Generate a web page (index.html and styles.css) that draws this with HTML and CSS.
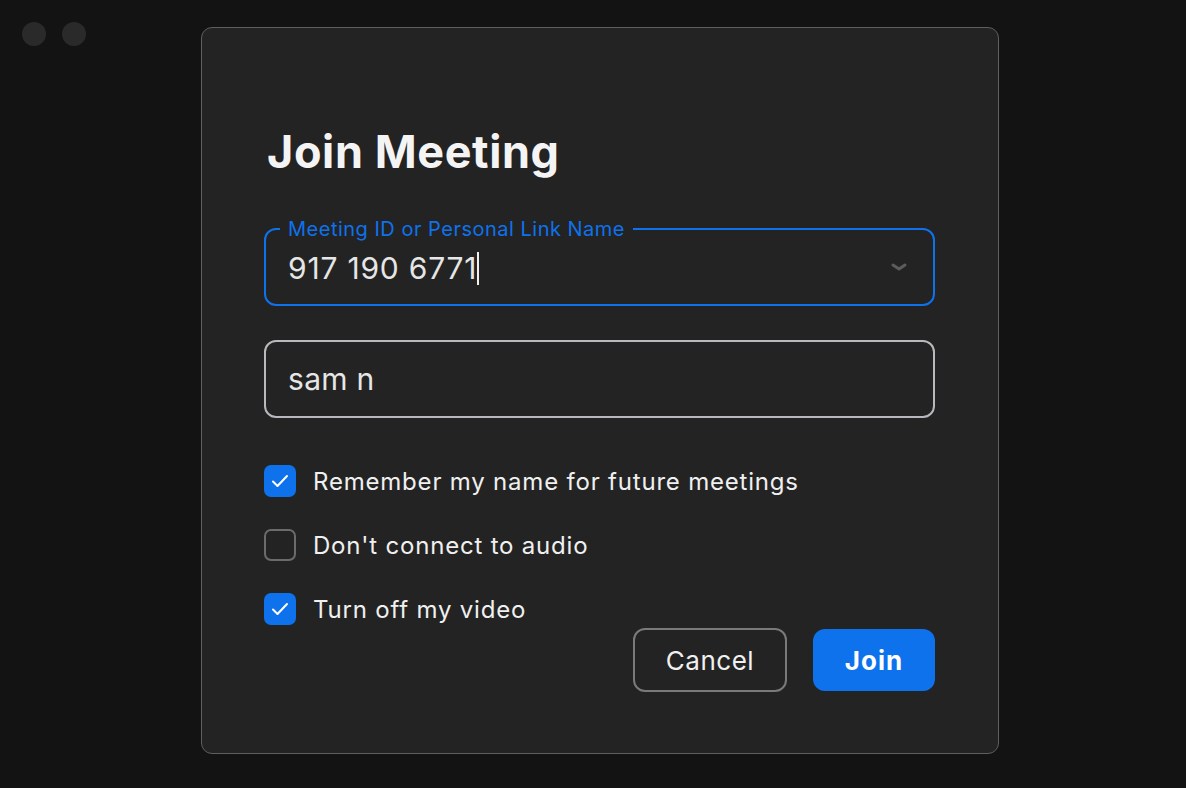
FILE: index.html
```html
<!DOCTYPE html>
<html>
<head>
<meta charset="utf-8">
<link rel="stylesheet" href="styles.css">
</head>
<body>
<div class="lights"><span class="light"></span><span class="light"></span></div>
<div class="dialog">
  <h1 class="title">Join Meeting</h1>
  <div class="field field-active">
    <span class="field-label">Meeting ID or Personal Link Name</span>
    <span class="field-value">917 190 6771<span class="caret"></span></span>
    <svg class="chevron" width="16" height="10" viewBox="0 0 16 10"><path d="M2 3 L8 7 L14 3" fill="none" stroke="#5c5c5c" stroke-width="3" stroke-linecap="round" stroke-linejoin="round"/></svg>
  </div>
  <div class="field field-plain">
    <span class="field-value">sam n</span>
  </div>
  <div class="checks">
    <div class="check-row"><span class="box box-on"><svg width="18" height="14" viewBox="0 0 18 14"><path d="M2 7.5 L6.5 12 L16 2" fill="none" stroke="#fff" stroke-width="2" stroke-linecap="round" stroke-linejoin="round"/></svg></span><span class="check-text">Remember my name for future meetings</span></div>
    <div class="check-row"><span class="box box-off"></span><span class="check-text">Don't connect to audio</span></div>
    <div class="check-row"><span class="box box-on"><svg width="18" height="14" viewBox="0 0 18 14"><path d="M2 7.5 L6.5 12 L16 2" fill="none" stroke="#fff" stroke-width="2" stroke-linecap="round" stroke-linejoin="round"/></svg></span><span class="check-text">Turn off my video</span></div>
  </div>
  <div class="actions">
    <button class="btn btn-cancel">Cancel</button>
    <button class="btn btn-join">Join</button>
  </div>
</div>
</body>
</html>
```
FILE: styles.css
```css
html, body {
  margin: 0;
  padding: 0;
  background: #131313;
  height: 788px;
  overflow: hidden;
  font-family: Inter, "Liberation Sans", sans-serif;
  color: #f0f0f0;
}
body {
  position: relative;
  padding: 27px 0 0 201px;
  box-sizing: border-box;
}
.lights {
  position: absolute;
  left: 22px;
  top: 22px;
  display: flex;
  gap: 16px;
}
.light {
  width: 24px;
  height: 24px;
  border-radius: 50%;
  background: #2a2a2a;
}
.dialog {
  width: 798px;
  height: 727px;
  box-sizing: border-box;
  background: #232323;
  border: 1.5px solid #5e5e5e;
  border-radius: 11px;
  padding: 96px 63px 0 62px;
  display: flex;
  flex-direction: column;
}
.title {
  margin: 0;
  font-size: 45px;
  line-height: 56px;
  font-weight: 700;
  color: #f4f4f4;
  letter-spacing: 0.6px;
  padding-left: 3px;
}
.field {
  position: relative;
  height: 78px;
  box-sizing: border-box;
  border-radius: 12px;
  display: flex;
  align-items: center;
  padding: 0 22px;
}
.field-active {
  margin-top: 48px;
  border: 2px solid #0e72ed;
}
.field-plain {
  margin-top: 34px;
  border: 2px solid #b8b8bd;
}
.field-label {
  position: absolute;
  left: 14px;
  top: -13px;
  padding: 0 8px;
  background: #232323;
  color: #0e72ed;
  font-size: 20px;
  letter-spacing: 0.5px;
  line-height: 24px;
}
.field-value {
  font-size: 30px;
  letter-spacing: 0.3px;
  color: #e6e6e6;
  display: flex;
  align-items: center;
}
.field-active .field-value {
  margin-top: 2px;
  letter-spacing: 0.8px;
}
.caret {
  display: inline-block;
  width: 2px;
  height: 33px;
  background: #f0f0f0;
  margin-left: 0;
}
.chevron {
  margin-left: auto;
  margin-right: 4px;
}
.checks {
  margin-top: 47px;
  display: flex;
  flex-direction: column;
  gap: 32px;
}
.check-row {
  display: flex;
  align-items: center;
  gap: 17px;
}
.box {
  width: 32px;
  height: 32px;
  box-sizing: border-box;
  border-radius: 7px;
  display: flex;
  align-items: center;
  justify-content: center;
}
.box-on {
  background: #0e72ed;
}
.box-off {
  border: 2px solid #6b6b6b;
}
.check-text {
  font-size: 24px;
  letter-spacing: 0.8px;
  color: #f0f0f0;
}
.actions {
  display: flex;
  justify-content: flex-end;
  gap: 26px;
  margin-top: 3px;
}
.btn {
  font-family: Inter, "Liberation Sans", sans-serif;
  font-size: 26px;
  border-radius: 12px;
  cursor: pointer;
}
.btn-cancel {
  width: 154px;
  height: 64px;
  background: transparent;
  border: 2px solid #7a7a7a;
  color: #f0f0f0;
  letter-spacing: 0.5px;
}
.btn-join {
  width: 122px;
  height: 62px;
  margin-top: 1px;
  background: #0e72ed;
  border: none;
  color: #fff;
  font-weight: 700;
  letter-spacing: 1px;
}
```
